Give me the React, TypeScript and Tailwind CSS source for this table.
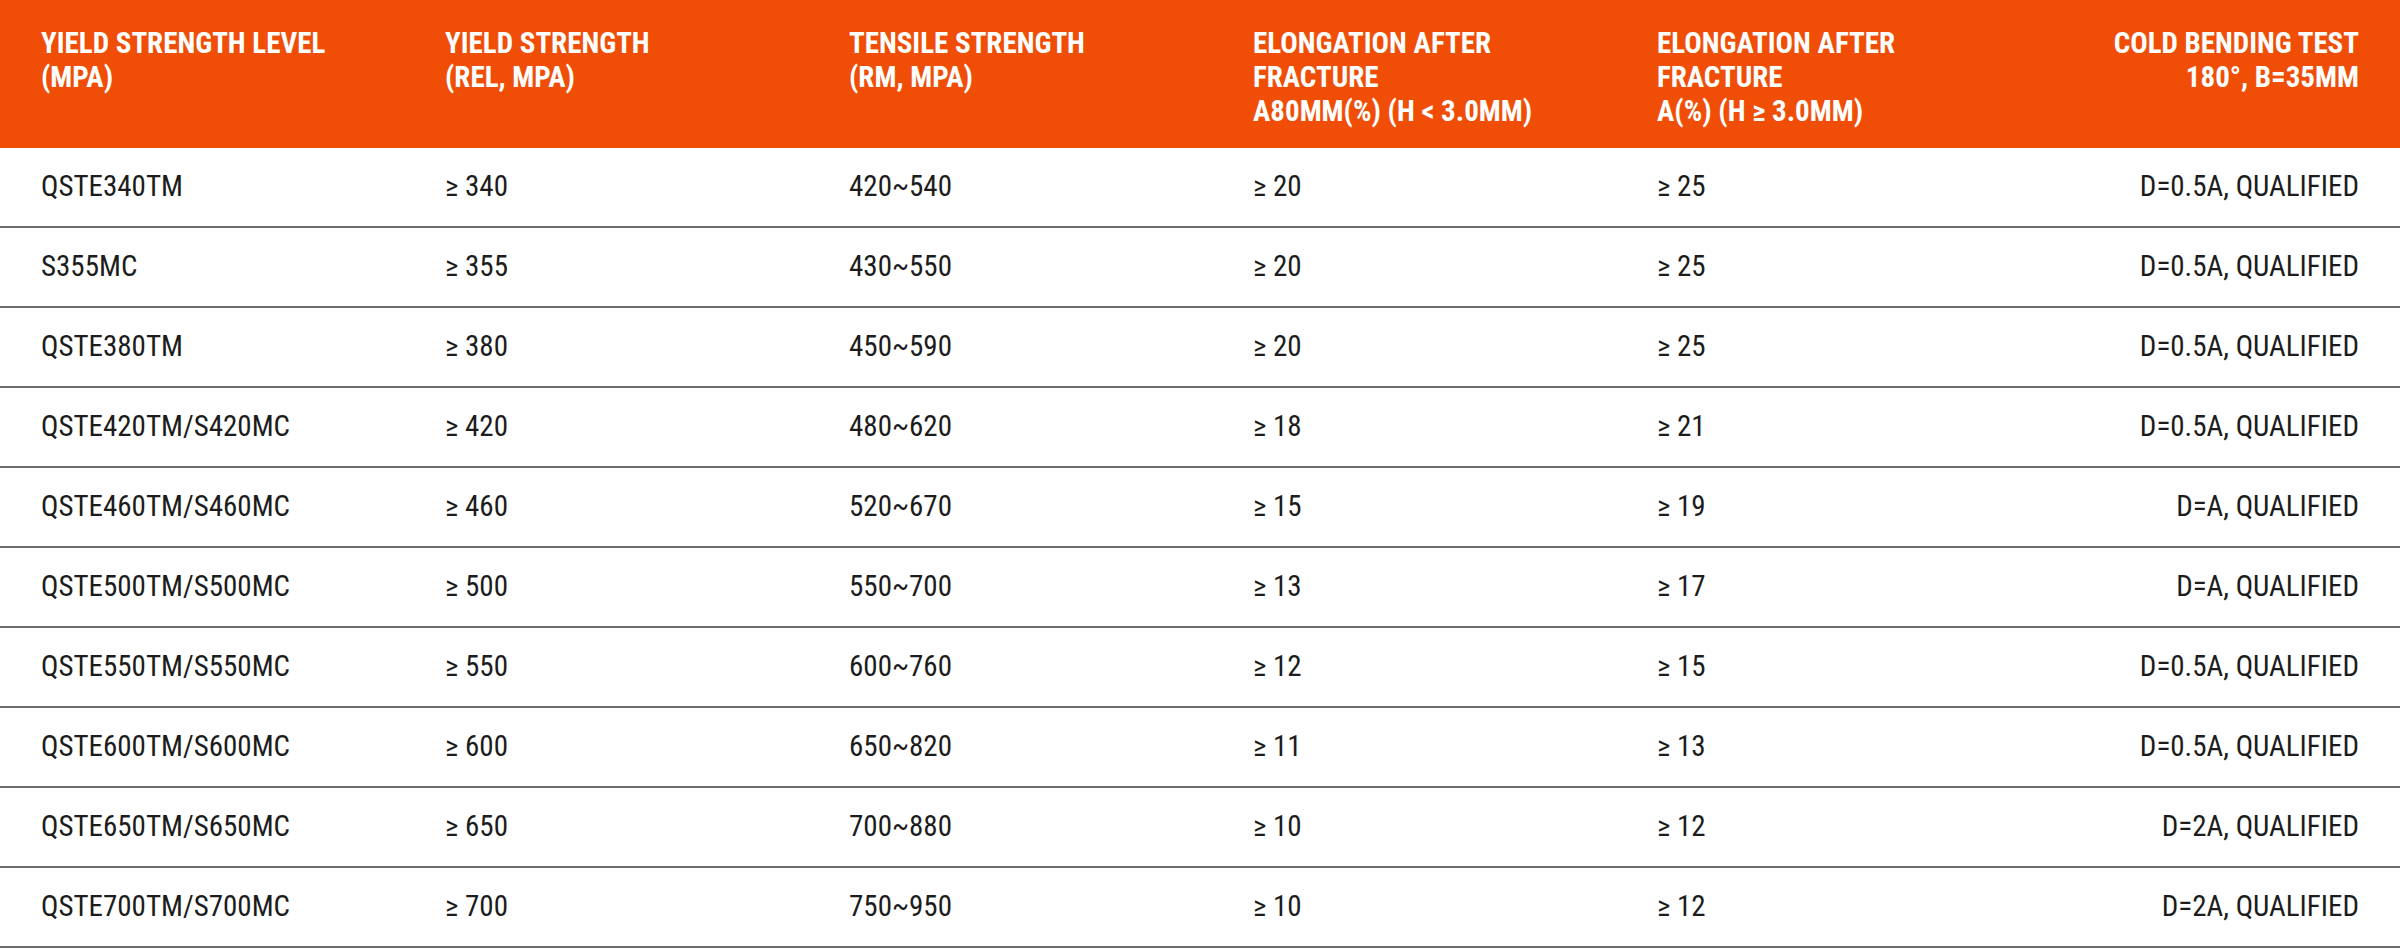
type Row = {
  grade: string;
  yieldStrength: string;
  tensile: string;
  elongA80: string;
  elongA: string;
  bending: string;
};

const rows: Row[] = [
  { grade: "QSTE340TM", yieldStrength: "≥ 340", tensile: "420~540", elongA80: "≥ 20", elongA: "≥ 25", bending: "D=0.5A, QUALIFIED" },
  { grade: "S355MC", yieldStrength: "≥ 355", tensile: "430~550", elongA80: "≥ 20", elongA: "≥ 25", bending: "D=0.5A, QUALIFIED" },
  { grade: "QSTE380TM", yieldStrength: "≥ 380", tensile: "450~590", elongA80: "≥ 20", elongA: "≥ 25", bending: "D=0.5A, QUALIFIED" },
  { grade: "QSTE420TM/S420MC", yieldStrength: "≥ 420", tensile: "480~620", elongA80: "≥ 18", elongA: "≥ 21", bending: "D=0.5A, QUALIFIED" },
  { grade: "QSTE460TM/S460MC", yieldStrength: "≥ 460", tensile: "520~670", elongA80: "≥ 15", elongA: "≥ 19", bending: "D=A, QUALIFIED" },
  { grade: "QSTE500TM/S500MC", yieldStrength: "≥ 500", tensile: "550~700", elongA80: "≥ 13", elongA: "≥ 17", bending: "D=A, QUALIFIED" },
  { grade: "QSTE550TM/S550MC", yieldStrength: "≥ 550", tensile: "600~760", elongA80: "≥ 12", elongA: "≥ 15", bending: "D=0.5A, QUALIFIED" },
  { grade: "QSTE600TM/S600MC", yieldStrength: "≥ 600", tensile: "650~820", elongA80: "≥ 11", elongA: "≥ 13", bending: "D=0.5A, QUALIFIED" },
  { grade: "QSTE650TM/S650MC", yieldStrength: "≥ 650", tensile: "700~880", elongA80: "≥ 10", elongA: "≥ 12", bending: "D=2A, QUALIFIED" },
  { grade: "QSTE700TM/S700MC", yieldStrength: "≥ 700", tensile: "750~950", elongA80: "≥ 10", elongA: "≥ 12", bending: "D=2A, QUALIFIED" },
];

const headers: string[][] = [
  ["YIELD STRENGTH LEVEL", "(MPA)"],
  ["YIELD STRENGTH", "(REL, MPA)"],
  ["TENSILE STRENGTH", "(RM, MPA)"],
  ["ELONGATION AFTER", "FRACTURE", "A80MM(%) (H < 3.0MM)"],
  ["ELONGATION AFTER", "FRACTURE", "A(%) (H ≥ 3.0MM)"],
  ["COLD BENDING TEST", "180°, B=35MM"],
];

const cols = "grid grid-cols-[404px_404px_404px_404px_404px_1fr]";

export default function App() {
  return (
    <div className="w-[2400px] bg-white font-['Roboto_Condensed','Liberation_Sans_Narrow','Roboto',sans-serif] text-[29px]">
      <div className={`${cols} h-[148px] bg-[#f04e07] text-white font-bold leading-[34px]`}>
        {headers.map((lines, i) => (
          <div
            key={i}
            className={clsx(
              "px-[41px] pt-[26px]",
              i === headers.length - 1 && "text-right"
            )}
          >
            {lines.map((line) => (
              <div key={line}>{line}</div>
            ))}
          </div>
        ))}
      </div>

      {rows.map((row) => (
        <div
          key={row.grade}
          className={`${cols} h-[80px] items-center border-b-2 border-[#6b6b6b] text-[#1c1c1c]`}
        >
          <div className="px-[41px]">{row.grade}</div>
          <div className="px-[41px]">{row.yieldStrength}</div>
          <div className="px-[41px]">{row.tensile}</div>
          <div className="px-[41px]">{row.elongA80}</div>
          <div className="px-[41px]">{row.elongA}</div>
          <div className="px-[41px] text-right">{row.bending}</div>
        </div>
      ))}
    </div>
  );
}

function clsx(...parts: (string | false | undefined)[]) {
  return parts.filter(Boolean).join(" ");
}
